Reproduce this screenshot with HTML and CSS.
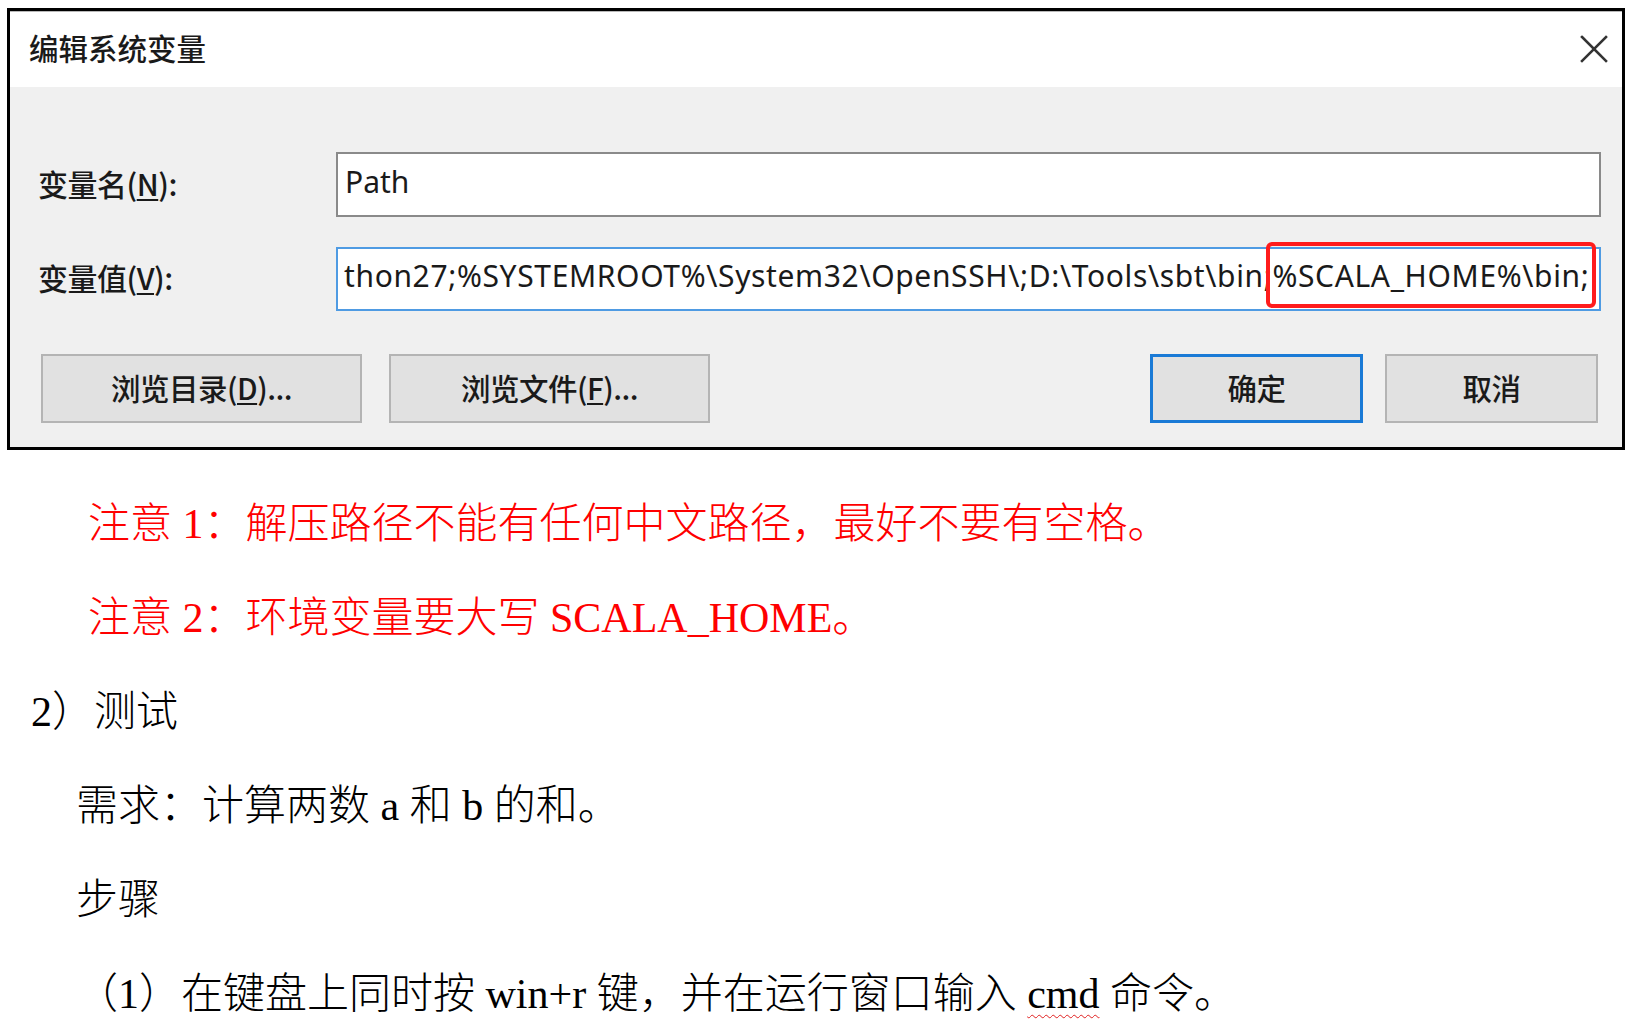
FILE: index.html
```html
<!DOCTYPE html>
<html lang="zh-CN">
<head>
<meta charset="utf-8">
<title>编辑系统变量</title>
<link rel="stylesheet" href="styles.css">
</head>
<body>
<div class="dialog">
  <div class="titlebar">
    <span class="title">编辑系统变量</span>
    <svg class="close" width="28" height="28" viewBox="0 0 28 28" aria-hidden="true">
      <line x1="2" y1="2" x2="26" y2="26" />
      <line x1="26" y1="2" x2="2" y2="26" />
    </svg>
  </div>
  <div class="dlg-body">
    <div class="field-row">
      <span class="field-label">变量名(<u>N</u>):</span>
      <div class="field-input"><span class="input-text">Path</span></div>
    </div>
    <div class="field-row second">
      <span class="field-label">变量值(<u>V</u>):</span>
      <div class="field-input focused">
        <span class="input-text scrolled">thon27;%SYSTEMROOT%\System32\OpenSSH\;D:\Tools\sbt\bin;%SCALA_HOME%\bin;</span>
        <span class="highlight"></span>
      </div>
    </div>
    <div class="btn-row">
      <div class="btn-group left">
        <span class="btn wide">浏览目录(<u>D</u>)...</span>
        <span class="btn wide">浏览文件(<u>F</u>)...</span>
      </div>
      <div class="btn-group right">
        <span class="btn narrow default">确定</span>
        <span class="btn narrow">取消</span>
      </div>
    </div>
  </div>
</div>
<div class="doc">
  <p class="line note indent-a">注意 1：解压路径不能有任何中文路径，最好不要有空格。</p>
  <p class="line note indent-a">注意 2：环境变量要大写 SCALA_HOME。</p>
  <p class="line indent-c">2）测试</p>
  <p class="line indent-b">需求：计算两数 a 和 b 的和。</p>
  <p class="line indent-b">步骤</p>
  <p class="line indent-b">（1）在键盘上同时按 win+r 键，并在运行窗口输入 <span class="spell">cmd</span> 命令。</p>
</div>
</body>
</html>
```

FILE: styles.css
```css
html, body {
  margin: 0;
  background: #ffffff;
}

body {
  padding: 8px 0 0 7px;
  overflow: hidden;
}

/* ---------- dialog ---------- */
.dialog {
  width: 1618px;
  box-sizing: border-box;
  border: 3px solid #000;
  font-family: "Noto Sans", "Noto Sans CJK SC", sans-serif;
  color: #111;
}

.titlebar {
  height: 76px;
  background: #ffffff;
  display: flex;
  align-items: center;
  justify-content: space-between;
  padding: 0 14px 0 19px;
  box-shadow: inset 0 1px 0 #b8b8b8;
}

.title {
  font-family: "Noto Sans CJK SC", sans-serif;
  font-size: 29.5px;
  font-weight: 500;
  color: #1a1a1a;
  line-height: 1;
  padding-bottom: 2px;
}

.close line {
  stroke: #333;
  stroke-width: 2.6;
  stroke-linecap: square;
}

.dlg-body {
  background: #f0f0f0;
  height: 360px;
  box-sizing: border-box;
  padding: 65px 21px 0 28px;
}

.field-row {
  display: flex;
  align-items: center;
  height: 65px;
}

.field-row.second {
  margin-top: 30px;
  height: 64px;
}

.field-label {
  width: 298px;
  flex: none;
  font-family: "Noto Sans CJK SC", sans-serif;
  font-size: 30px;
  font-weight: 500;
  color: #1a1a1a;
  letter-spacing: -0.5px;
  padding-bottom: 4px;
}

.field-label u,
.btn u {
  text-underline-offset: 3px;
  text-decoration-thickness: 2px;
}

.field-input {
  position: relative;
  flex: 1;
  height: 100%;
  box-sizing: border-box;
  background: #fff;
  border: 2px solid #8a8a8a;
  display: flex;
  align-items: center;
  padding-left: 7px;
  white-space: nowrap;
}

.field-input.focused {
  border-color: #4f9be3;
  padding-left: 6px;
}

.input-text {
  font-family: "Noto Sans", sans-serif;
  font-size: 30px;
  color: #1a1a1a;
  line-height: 1;
  padding-bottom: 6px;
}

.scrolled {
  letter-spacing: 0.64px;
}

.highlight {
  position: absolute;
  left: 928px;
  top: -7px;
  width: 330px;
  height: 66px;
  box-sizing: border-box;
  border: 4px solid #ff1c1c;
  border-radius: 6px;
}

.btn-row {
  display: flex;
  justify-content: space-between;
  margin: 43px 3px 0 3px;
}

.btn-group {
  display: flex;
}

.btn-group.left {
  gap: 27px;
}

.btn-group.right {
  gap: 22px;
}

.btn {
  height: 69px;
  box-sizing: border-box;
  background: #e1e1e1;
  border: 2px solid #b4b4b4;
  display: flex;
  align-items: center;
  justify-content: center;
  font-family: "Noto Sans CJK SC", sans-serif;
  font-size: 29.5px;
  font-weight: 500;
  color: #1a1a1a;
  letter-spacing: -0.5px;
  padding-bottom: 4px;
}

.btn.wide {
  width: 321px;
}

.btn.narrow {
  width: 213px;
}

.btn.default {
  border: 3px solid #1a7ad6;
}

/* ---------- document ---------- */
.doc {
  margin-top: 27px;
  font-family: "Liberation Serif", "Noto Sans CJK SC", serif;
  font-size: 42px;
  font-weight: 300;
  color: #000;
}

.line {
  margin: 0;
  height: 94px;
  line-height: 94px;
  white-space: nowrap;
}

.note {
  color: #ff0000;
}

.indent-a {
  padding-left: 81px;
}

.indent-b {
  padding-left: 69px;
}

.indent-c {
  padding-left: 24px;
}

.spell {
  text-decoration: underline wavy #e02020;
  text-decoration-thickness: 1px;
  text-underline-offset: 6px;
}
```
